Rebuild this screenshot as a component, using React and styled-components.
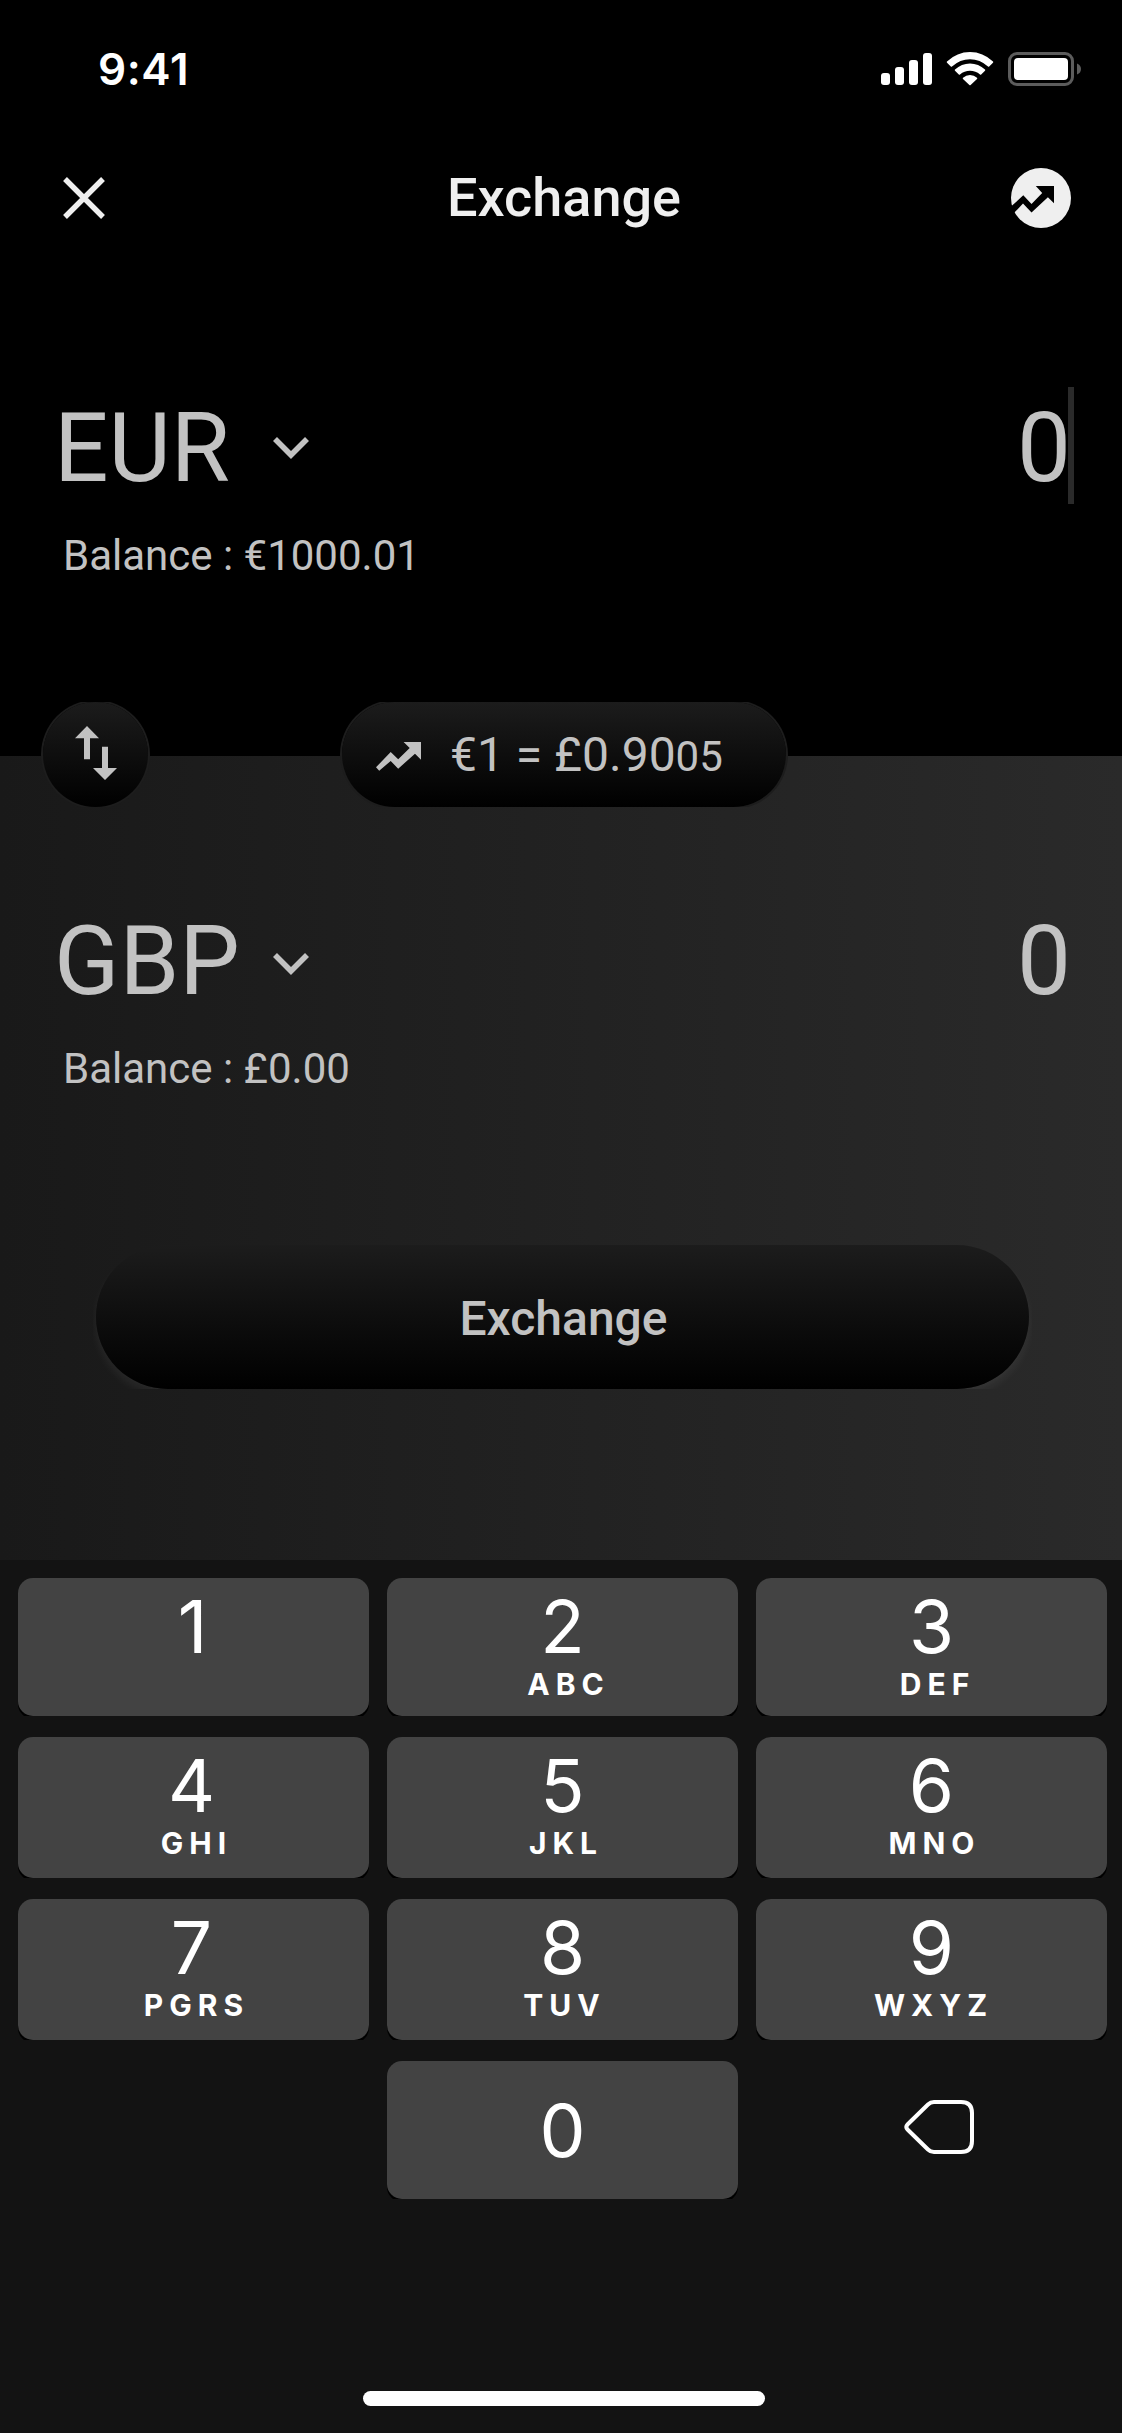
import React from 'react';
import styled, { createGlobalStyle, css } from 'styled-components';

const GlobalStyle = createGlobalStyle`
  * { box-sizing: border-box; }
  body { margin: 0; background: #000; }
  button { appearance: none; border: 0; margin: 0; padding: 0; background: none; color: inherit; font: inherit; }
  svg { display: block; flex: none; }
`;

const Screen = styled.main`
  display: flex;
  flex-direction: column;
  width: 1122px;
  height: 2433px;
  overflow: hidden;
  background: #000;
  color: #c2c2c2;
  font-family: Roboto, 'Liberation Sans', sans-serif;
`;

const StatusBar = styled.div`
  display: flex;
  align-items: center;
  height: 138px;
  padding: 0 41px 0 98px;
  color: #fff;
`;

const Clock = styled.span`
  flex: 1;
  font: 600 44px/54px Inter, 'Liberation Sans', sans-serif;
  letter-spacing: 0.6px;
`;

const Header = styled.header`
  display: grid;
  grid-template-columns: 60px 1fr 60px;
  align-items: center;
  height: 120px;
  padding: 0 51px 0 54px;
  color: #efefef;
`;

const Title = styled.h1`
  margin: 0;
  padding-left: 3px;
  text-align: center;
  font-weight: 500;
  font-size: 54px;
  line-height: 64px;
`;

const IconButton = styled.button`
  display: flex;
  align-items: center;
  justify-content: center;
  width: 60px;
  height: 60px;
`;

const SourcePanel = styled.section`
  height: 498px;
  padding: 129px 48px 0 54px;
`;

const TargetPanel = styled.section`
  height: 804px;
  padding: 144px 48px 0 54px;
  background: linear-gradient(90deg, #191919, #2a2a2a);
`;

const CurrencyRow = styled.div`
  display: flex;
  align-items: center;
  height: 117px;
`;

const Code = styled.span`
  width: 219px;
  padding-top: 5px;
  font-size: 96px;
  line-height: 112px;
`;

const Chevron = styled.span`
  padding-top: ${(p) => p.$drop}px;
`;

const Amount = styled.span`
  display: flex;
  align-items: center;
  margin-left: auto;
  padding-right: ${(p) => (p.$active ? 0 : 3)}px;
`;

const Value = styled.span`
  margin-right: ${(p) => (p.$active ? -3 : 0)}px;
  padding-top: 5px;
  font-size: 96px;
  line-height: 112px;
`;

const Caret = styled.i`
  width: 6px;
  height: 117px;
  background: #2a2a2a;
`;

const Balance = styled.p`
  margin: 25px 0 0 9px;
  font-size: 42px;
  line-height: 54px;
`;

const RateBar = styled.div`
  position: relative;
  z-index: 1;
  display: flex;
  gap: 188px;
  height: 108px;
  margin: -54px 0;
  padding: 0 40px;
`;

const PillClip = styled.div`
  overflow: hidden;
  height: 105px;
  padding: 0 3px;
`;

const pill = css`
  display: flex;
  align-items: center;
  height: 105px;
  border-radius: 53px;
  background: linear-gradient(#1c1c1c, #000);
  box-shadow: 0 0 0 2px #1d1d1d;
`;

const SwapButton = styled.button`
  ${pill}
  justify-content: center;
  width: 105px;
  padding-bottom: 3px;
`;

const RatePill = styled.button`
  ${pill}
  width: 444px;
  padding: 3px 0 0 34px;
  font-size: 48px;
  white-space: pre;
`;

const RateText = styled.span`
  margin-left: 29px;
  line-height: 58px;
`;

const Fraction = styled.span`
  font-size: 42px;
`;

const ButtonClip = styled.div`
  overflow: hidden;
  height: 144px;
  margin: 149px 42px 0 39px;
  padding: 0 3px;
`;

const ExchangeButton = styled.button`
  width: 933px;
  height: 144px;
  padding: 2px 0 0 2px;
  border-radius: 72px;
  background: linear-gradient(#1c1c1c, #000);
  box-shadow: 0 6px 12px -2px rgba(255, 255, 255, 0.08);
  font-weight: 500;
  font-size: 48px;
`;

const Keyboard = styled.section`
  flex: 1;
  display: flex;
  flex-direction: column;
  align-items: center;
  padding: 18px 15px 27px 18px;
  background: #131313;
  color: #fff;
  font-family: Inter, 'Liberation Sans', sans-serif;
`;

const Keys = styled.div`
  display: grid;
  grid-template-columns: repeat(3, 351px);
  grid-template-rows: 138px 141px 141px 138px;
  gap: 21px 18px;
`;

const KeyClip = styled.div`
  display: flex;
  overflow: hidden;
`;

const Key = styled.button`
  flex: 1;
  display: flex;
  flex-direction: column;
  align-items: center;
  justify-content: ${(p) => (p.$centered ? 'center' : 'flex-start')};
  padding-top: ${(p) => (p.$centered ? 2 : 4)}px;
  border-radius: 15px;
  background: #434343;
  box-shadow: 0 3px 0 #000;
`;

const Digit = styled.span`
  padding-right: ${(p) => p.$nudge || 0}px;
  font-size: 73px;
  line-height: 90px;
`;

const Letters = styled.span`
  margin-top: -6px;
  padding-left: ${(p) => p.$indent}px;
  font-weight: 700;
  font-size: 30px;
  line-height: 36px;
  letter-spacing: 6px;
`;

const DeleteKey = styled.button`
  display: flex;
  align-items: center;
  justify-content: center;
  padding: 0 0 6px 15px;
`;

const HomeIndicator = styled.div`
  width: 402px;
  height: 15px;
  margin: auto 0 0 3px;
  border-radius: 8px;
  background: #fff;
`;

const StatusIcons = () => (
  <svg width="200" height="34" viewBox="0 0 200 34" fill="#fff" aria-hidden="true">
    <rect x="0" y="21" width="9" height="12" rx="3" />
    <rect x="14" y="15" width="9" height="18" rx="3" />
    <rect x="28" y="8" width="9" height="25" rx="3" />
    <rect x="42" y="1" width="9" height="32" rx="3" />
    <path d="M66 9.5Q76 0 89 0T112 9.5Q112.600 10 112 10.700L108.200 14.500Q107.500 15 107 14.500Q99 7.200 89 7.200T71 14.500Q70.500 15 69.800 14.500L66 10.700Q65.400 10 66 9.500Z" />
    <path d="M74 17.500Q80.500 11.500 89 11.500T104 17.500Q104.600 18 104 18.700L100.200 22.400Q99.600 22.900 99 22.400Q94.700 18.700 89 18.700T79 22.400Q78.400 22.900 77.800 22.400L74 18.700Q73.400 18 74 17.500Z" />
    <path d="M82 25.700Q85 23 89 23T96 25.700Q96.600 26.300 96 26.900L89.600 33Q89 33.500 88.400 33L82 26.900Q81.400 26.300 82 25.700Z" />
    <rect x="128.500" y="1.500" width="63" height="31" rx="7.500" fill="none" stroke="#5c5c5c" strokeWidth="3" />
    <rect x="133" y="6" width="54" height="22" rx="4" />
    <path d="M196 11.500Q200 13 200 17T196 22.500Z" fill="#5c5c5c" />
  </svg>
);

const CloseIcon = () => (
  <svg width="42" height="42" viewBox="0 0 42 42" stroke="currentColor" strokeWidth="5.400" aria-hidden="true">
    <path d="M2 2L40 40M40 2L2 40" />
  </svg>
);

const TrendBadge = () => (
  <svg width="60" height="60" viewBox="0 0 60 60" aria-hidden="true">
    <circle cx="30" cy="30" r="30" fill="currentColor" />
    <path d="M-1 39.500L12.300 27.300L20.500 36L31.200 25L24.800 18H43V35.300L36.900 29.300L20.500 44.500L12 35.500L3.700 44.300L0 46Z" fill="#000" />
  </svg>
);

const TrendIcon = () => (
  <svg width="45" height="29" viewBox="0 0 45 29" fill="currentColor" aria-hidden="true">
    <path d="M0 25.300L14.700 10L22.200 17.300L33.700 6L27.600 0H45V17.700L39 11.700L22.200 26.700L14.700 19L3.200 28.700Z" />
  </svg>
);

const SwapIcon = () => (
  <svg width="42" height="54" viewBox="0 0 42 54" fill="currentColor" aria-hidden="true">
    <path d="M12 0L24 12.300H15V33.300H9V12.300H0Z" />
    <path d="M30 54L18 42H27V20.700H33V42H42Z" />
  </svg>
);

const ChevronIcon = () => (
  <svg width="36" height="22" viewBox="0 0 36 22" fill="none" stroke="currentColor" strokeWidth="5.600" aria-hidden="true">
    <path d="M2 2L18 18L34 2" />
  </svg>
);

const DeleteIcon = () => (
  <svg width="70" height="54" viewBox="0 0 70 54" fill="none" stroke="currentColor" strokeWidth="4" aria-hidden="true">
    <path d="M30 2H57Q68 2 68 13V41Q68 52 57 52H30Q26.500 52 24 49.500L3.500 29.500Q1 27 3.500 24.500L24 4.500Q26.500 2 30 2Z" />
  </svg>
);

const KEYS = [
  { digit: '1', nudge: 2 },
  { digit: '2', letters: 'ABC', indent: 12 },
  { digit: '3', letters: 'DEF', indent: 12 },
  { digit: '4', letters: 'GHI', nudge: 4 },
  { digit: '5', letters: 'JKL', indent: 7 },
  { digit: '6', letters: 'MNO' },
  { digit: '7', letters: 'PGRS', nudge: 4 },
  { digit: '8', letters: 'TUV', indent: 4 },
  { digit: '9', letters: 'WXYZ', indent: 4 },
];

const Currency = ({ code, balance, active }) => (
  <>
    <CurrencyRow>
      <Code>{code}</Code>
      <Chevron $drop={active ? 4 : 10}><ChevronIcon /></Chevron>
      <Amount $active={active}>
        <Value $active={active}>0</Value>
        {active && <Caret />}
      </Amount>
    </CurrencyRow>
    <Balance>Balance : {balance}</Balance>
  </>
);

export default function App() {
  return (
    <Screen>
      <GlobalStyle />
      <StatusBar>
        <Clock>9:41</Clock>
        <StatusIcons />
      </StatusBar>
      <Header>
        <IconButton aria-label="Close"><CloseIcon /></IconButton>
        <Title>Exchange</Title>
        <IconButton aria-label="Rates"><TrendBadge /></IconButton>
      </Header>
      <SourcePanel>
        <Currency code="EUR" balance="€1000.01" active />
      </SourcePanel>
      <RateBar>
        <PillClip>
          <SwapButton aria-label="Swap currencies"><SwapIcon /></SwapButton>
        </PillClip>
        <PillClip>
          <RatePill>
            <TrendIcon />
            <RateText>€1 = £0.90<Fraction>05</Fraction></RateText>
          </RatePill>
        </PillClip>
      </RateBar>
      <TargetPanel>
        <Currency code="GBP" balance="£0.00" />
        <ButtonClip>
          <ExchangeButton>Exchange</ExchangeButton>
        </ButtonClip>
      </TargetPanel>
      <Keyboard>
        <Keys>
          {KEYS.map(({ digit, letters, indent = 6, nudge }) => (
            <KeyClip key={digit}>
              <Key>
                <Digit $nudge={nudge}>{digit}</Digit>
                {letters && <Letters $indent={indent}>{letters}</Letters>}
              </Key>
            </KeyClip>
          ))}
          <span />
          <KeyClip>
            <Key $centered><Digit>0</Digit></Key>
          </KeyClip>
          <DeleteKey aria-label="Delete"><DeleteIcon /></DeleteKey>
        </Keys>
        <HomeIndicator />
      </Keyboard>
    </Screen>
  );
}
